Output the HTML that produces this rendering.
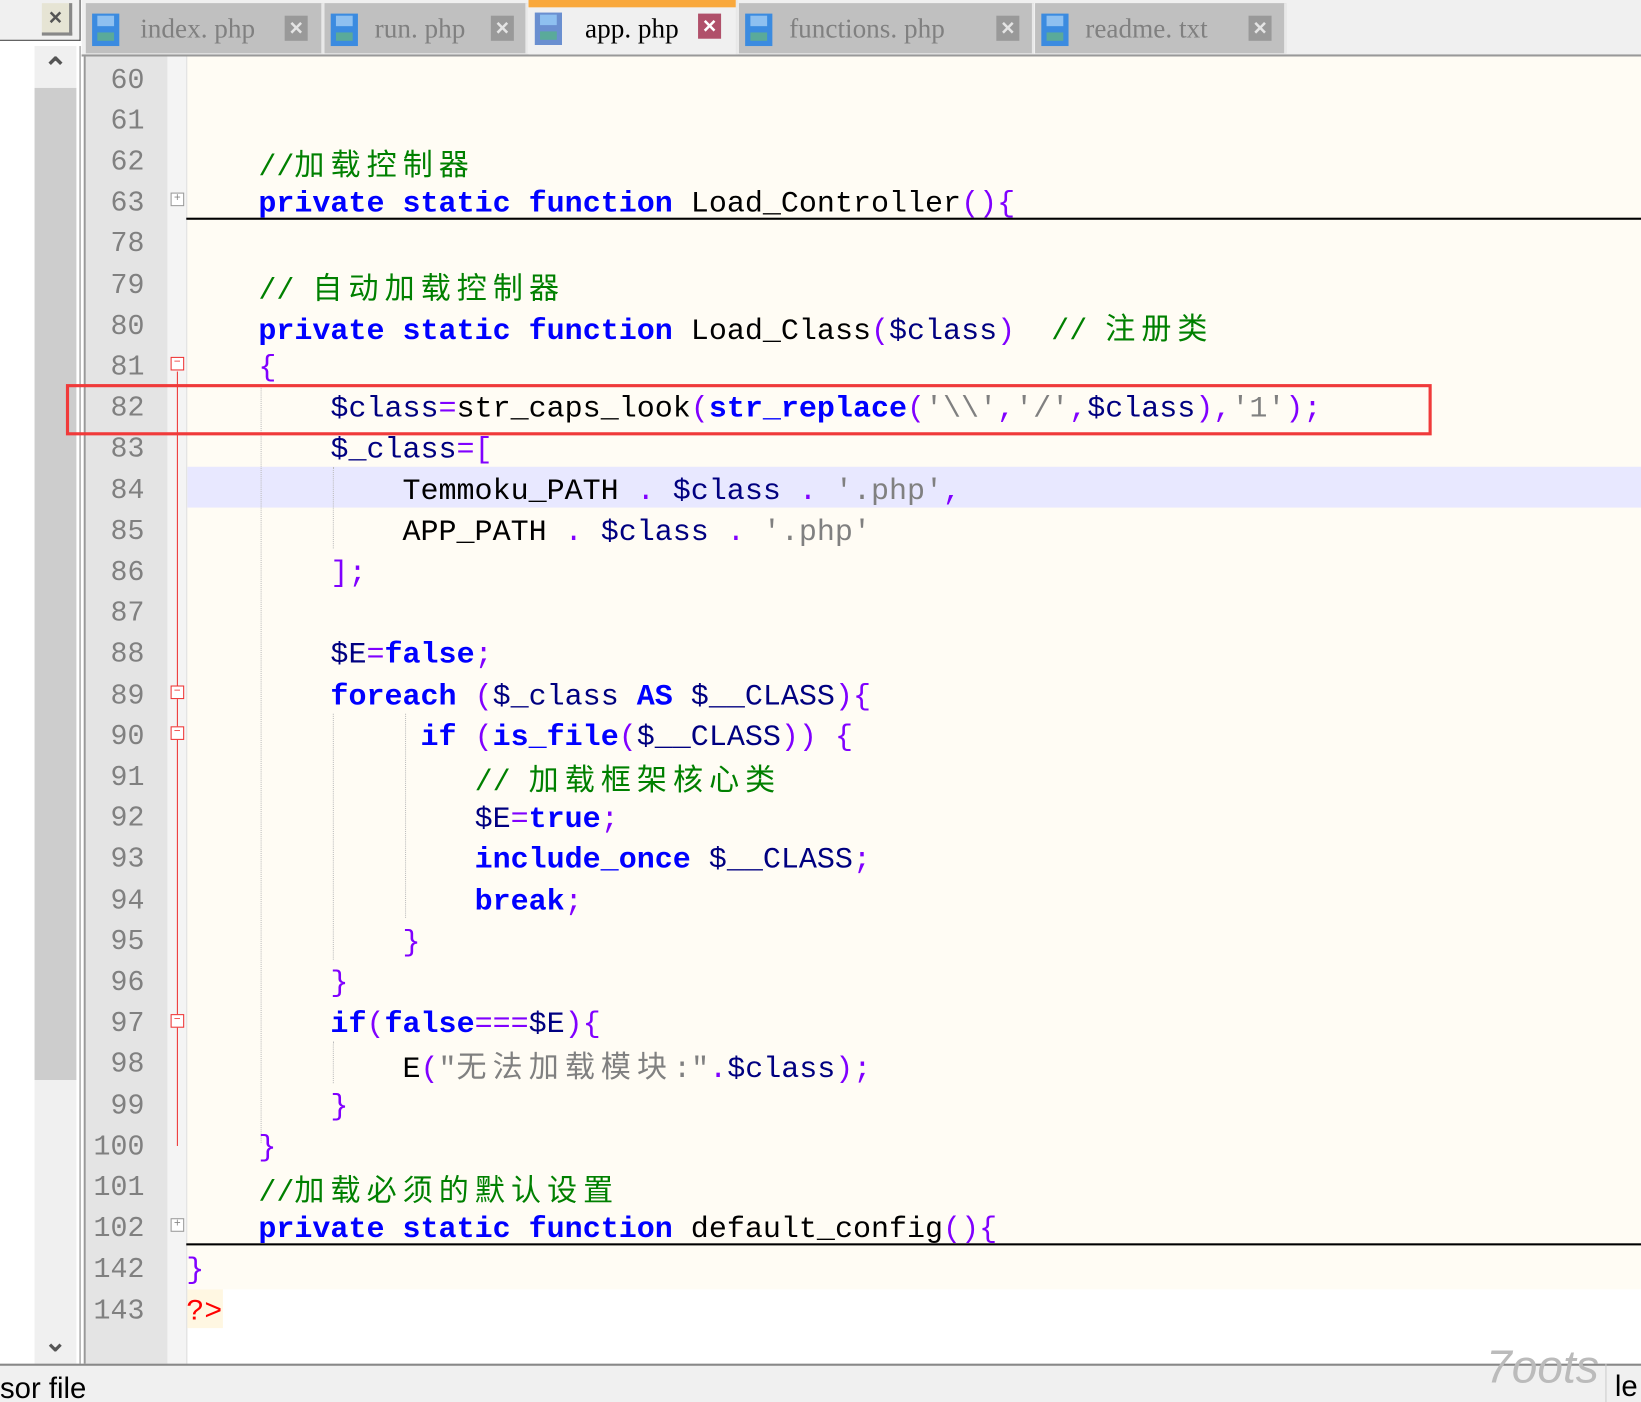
<!DOCTYPE html>
<html><head><meta charset="utf-8">
<style>
html,body{margin:0;padding:0;width:1641px;height:1402px;overflow:hidden;background:#fff;}
#s{position:absolute;left:0;top:0;width:1568px;height:1340px;transform:scale(1.04656);transform-origin:0 0;overflow:hidden;background:#fff;}
.a{position:absolute;}
.row{position:absolute;left:178px;height:39.2px;line-height:39.2px;font-family:"Liberation Mono","Noto Sans CJK SC",monospace;font-size:28.7px;white-space:pre;color:#000;margin-top:2px;}
.ln{position:absolute;left:82px;width:56px;text-align:right;height:39.2px;line-height:39.2px;font-family:"Liberation Mono",monospace;font-size:27px;color:#808080;margin-top:3px;}
.k{color:#0000ff;font-weight:bold;}
.o{color:#8000ff;}
.s{color:#808080;}
.v{color:#000080;}
.c{color:#008000;}
.z{letter-spacing:5.8px;font-family:"Noto Sans CJK SC",sans-serif;}
.tab{position:absolute;top:3px;height:48px;background:#c0c0c0;border-right:2px solid #e8e8e8;font-family:"Liberation Serif","Noto Serif CJK SC",serif;font-size:26px;color:#808080;}
.tab .t{position:absolute;top:10px;}
.fl{position:absolute;left:6px;top:10px;width:26px;height:31px;background:#3b8be0;}
.fl:before{content:"";position:absolute;left:5px;top:2px;width:16px;height:10px;background:#8ec0f0;}
.fl:after{content:"";position:absolute;left:5px;top:18px;width:16px;height:8px;background:#5aaa9a;}
.x{position:absolute;top:12px;width:22px;height:24px;background:#999;color:#e4e4e4;font:bold 22px "Liberation Sans",sans-serif;text-align:center;line-height:24px;}
.g{position:absolute;border-left:1px dotted #bbb;}
.fb{position:absolute;left:163px;width:11px;height:11px;border:1px solid #999;background:#fff;font:11px/11px "Liberation Mono",monospace;text-align:center;color:#888;}
.fr{border-color:#e33;color:#e33;}
</style></head><body><div id="s">
<div class="a" style="left:0;top:0;width:76px;height:38px;background:#f0f0f0;border-bottom:1px solid #444;border-right:1px solid #444"></div>
<div class="a" style="left:40px;top:3px;width:26px;height:28px;background:#e6e4d4;border-right:3px solid #888;border-bottom:3px solid #888;font:bold 22px/28px 'Liberation Sans',sans-serif;color:#555;text-align:center">×</div>
<div class="a" style="left:0;top:44px;width:76px;height:1260px;background:#fff;border-right:1px solid #888"></div>
<div class="a" style="left:33px;top:44px;width:40px;height:40px;background:#f0f0f0;font:bold 28px/44px 'Liberation Sans',sans-serif;color:#555;text-align:center">&#8963;</div>
<div class="a" style="left:33px;top:84px;width:40px;height:948px;background:#cdcdcd"></div>
<div class="a" style="left:33px;top:1032px;width:40px;height:272px;background:#f0f0f0"></div>
<div class="a" style="left:33px;top:1262px;width:40px;height:40px;font:bold 26px/40px 'Liberation Sans',sans-serif;color:#555;text-align:center">&#8964;</div>
<div class="a" style="left:78px;top:0;width:1490px;height:52px;background:#f0f0f0;border-bottom:2px solid #999"></div>
<div class="tab" style="left:82px;width:225px"><div class="fl"></div><span class="t" style="left:52px">index. php</span><div class="x" style="left:190px">×</div></div>
<div class="tab" style="left:310px;width:192px"><div class="fl"></div><span class="t" style="left:48px">run. php</span><div class="x" style="left:159px">×</div></div>
<div class="tab" style="left:505px;top:0;height:52px;width:198px;background:#f0f0f0;color:#000"><div class="a" style="left:0;top:0;width:198px;height:7px;background:#f9a83c"></div><div class="fl" style="top:12px;background:#6a8fd0"></div><span class="t" style="left:54px;top:13px">app. php</span><div class="x" style="left:162px;top:13px;background:#b0506a;color:#fff">×</div></div>
<div class="tab" style="left:706px;width:280px"><div class="fl"></div><span class="t" style="left:48px">functions. php</span><div class="x" style="left:246px">×</div></div>
<div class="tab" style="left:989px;width:238px"><div class="fl"></div><span class="t" style="left:48px">readme. txt</span><div class="x" style="left:204px">×</div></div>
<div class="a" style="left:80px;top:54px;width:1488px;height:1249px;background:#fff;border-left:2px solid #999"></div>
<div class="a" style="left:82px;top:54px;width:78px;height:1249px;background:#e4e4e4"></div>
<div class="a" style="left:160px;top:54px;width:18px;height:1249px;background:#f4f4f4;border-right:1px solid #ddd"></div>
<div class="a" style="left:179px;top:54px;width:1389px;height:1178px;background:#fffcf4"></div>
<div class="a" style="left:179px;top:1232px;width:34px;height:37px;background:#fff7e2"></div>
<div class="a" style="left:179px;top:446px;width:1389px;height:39px;background:#e8e8ff"></div>
<div class="a" style="left:178px;top:208px;width:1390px;height:2px;background:#000"></div>
<div class="a" style="left:178px;top:1188px;width:1390px;height:2px;background:#000"></div>
<div class="a" style="left:169px;top:355px;width:1px;height:740px;background:#e33"></div>
<div class="g" style="left:249px;top:367px;height:725px"></div>
<div class="g" style="left:318px;top:446px;height:78px"></div>
<div class="g" style="left:318px;top:682px;height:235px"></div>
<div class="g" style="left:387px;top:682px;height:195px"></div>
<div class="g" style="left:318px;top:995px;height:40px"></div>
<div class="fb" style="top:184px">+</div>
<div class="fb fr" style="top:341px">−</div>
<div class="fb fr" style="top:655px">−</div>
<div class="fb fr" style="top:694px">−</div>
<div class="fb fr" style="top:969px">−</div>
<div class="fb" style="top:1164px">+</div>

<div class="ln" style="top:55.5px">60</div>
<div class="ln" style="top:94.7px">61</div>
<div class="ln" style="top:133.9px">62</div>
<div class="ln" style="top:173.1px">63</div>
<div class="ln" style="top:212.3px">78</div>
<div class="ln" style="top:251.5px">79</div>
<div class="ln" style="top:290.7px">80</div>
<div class="ln" style="top:329.9px">81</div>
<div class="ln" style="top:369.1px">82</div>
<div class="ln" style="top:408.3px">83</div>
<div class="ln" style="top:447.5px">84</div>
<div class="ln" style="top:486.7px">85</div>
<div class="ln" style="top:525.9px">86</div>
<div class="ln" style="top:565.1px">87</div>
<div class="ln" style="top:604.3px">88</div>
<div class="ln" style="top:643.5px">89</div>
<div class="ln" style="top:682.7px">90</div>
<div class="ln" style="top:721.9px">91</div>
<div class="ln" style="top:761.1px">92</div>
<div class="ln" style="top:800.3px">93</div>
<div class="ln" style="top:839.5px">94</div>
<div class="ln" style="top:878.7px">95</div>
<div class="ln" style="top:917.9px">96</div>
<div class="ln" style="top:957.1px">97</div>
<div class="ln" style="top:996.3px">98</div>
<div class="ln" style="top:1035.5px">99</div>
<div class="ln" style="top:1074.7px">100</div>
<div class="ln" style="top:1113.9px">101</div>
<div class="ln" style="top:1153.1px">102</div>
<div class="ln" style="top:1192.3px">142</div>
<div class="ln" style="top:1231.5px">143</div>

<div class="row" style="top:133.9px">    <span class="c">//<span class="z">加载控制器</span></span></div>
<div class="row" style="top:173.1px">    <span class="k">private</span> <span class="k">static</span> <span class="k">function</span> Load_Controller<span class="o">(){</span></div>
<div class="row" style="top:251.5px">    <span class="c">// <span class="z">自动加载控制器</span></span></div>
<div class="row" style="top:290.7px">    <span class="k">private</span> <span class="k">static</span> <span class="k">function</span> Load_Class<span class="o">(</span><span class="v">$class</span><span class="o">)</span>  <span class="c">// <span class="z">注册类</span></span></div>
<div class="row" style="top:329.9px">    <span class="o">{</span></div>
<div class="row" style="top:369.1px">        <span class="v">$class</span><span class="o">=</span>str_caps_look<span class="o">(</span><span class="k">str_replace</span><span class="o">(</span><span class="s">'\\'</span><span class="o">,</span><span class="s">'/'</span><span class="o">,</span><span class="v">$class</span><span class="o">),</span><span class="s">'1'</span><span class="o">);</span></div>
<div class="row" style="top:408.3px">        <span class="v">$_class</span><span class="o">=[</span></div>
<div class="row" style="top:447.5px">            Temmoku_PATH <span class="o">.</span> <span class="v">$class</span> <span class="o">.</span> <span class="s">'.php'</span><span class="o">,</span></div>
<div class="row" style="top:486.7px">            APP_PATH <span class="o">.</span> <span class="v">$class</span> <span class="o">.</span> <span class="s">'.php'</span></div>
<div class="row" style="top:525.9px">        <span class="o">];</span></div>
<div class="row" style="top:604.3px">        <span class="v">$E</span><span class="o">=</span><span class="k">false</span><span class="o">;</span></div>
<div class="row" style="top:643.5px">        <span class="k">foreach</span> <span class="o">(</span><span class="v">$_class</span> <span class="k">AS</span> <span class="v">$__CLASS</span><span class="o">){</span></div>
<div class="row" style="top:682.7px">             <span class="k">if</span> <span class="o">(</span><span class="k">is_file</span><span class="o">(</span><span class="v">$__CLASS</span><span class="o">))</span> <span class="o">{</span></div>
<div class="row" style="top:721.9px">                <span class="c">// <span class="z">加载框架核心类</span></span></div>
<div class="row" style="top:761.1px">                <span class="v">$E</span><span class="o">=</span><span class="k">true</span><span class="o">;</span></div>
<div class="row" style="top:800.3px">                <span class="k">include_once</span> <span class="v">$__CLASS</span><span class="o">;</span></div>
<div class="row" style="top:839.5px">                <span class="k">break</span><span class="o">;</span></div>
<div class="row" style="top:878.7px">            <span class="o">}</span></div>
<div class="row" style="top:917.9px">        <span class="o">}</span></div>
<div class="row" style="top:957.1px">        <span class="k">if</span><span class="o">(</span><span class="k">false</span><span class="o">===</span><span class="v">$E</span><span class="o">){</span></div>
<div class="row" style="top:996.3px">            E<span class="o">(</span><span class="s">"<span class="z">无法加载模块</span>:"</span><span class="o">.</span><span class="v">$class</span><span class="o">);</span></div>
<div class="row" style="top:1035.5px">        <span class="o">}</span></div>
<div class="row" style="top:1074.7px">    <span class="o">}</span></div>
<div class="row" style="top:1113.9px">    <span class="c">//<span class="z">加载必须的默认设置</span></span></div>
<div class="row" style="top:1153.1px">    <span class="k">private</span> <span class="k">static</span> <span class="k">function</span> default_config<span class="o">(){</span></div>
<div class="row" style="top:1192.3px"><span class="o">}</span></div>
<div class="row" style="top:1231.5px"><span style="color:#ff0000">?&gt;</span></div>

<div class="a" style="left:63px;top:367px;width:1299px;height:43px;border:3px solid #f03a3a"></div>
<div class="a" style="left:0;top:1303px;width:1568px;height:37px;background:#f0f0f0;border-top:2px solid #888"></div>
<div class="a" style="left:0;top:1310px;font:28px/34px 'Liberation Sans',sans-serif;color:#000">sor file</div>
<div class="a" style="left:1534px;top:1303px;width:34px;height:37px;border-left:1px solid #ccc;font:28px/44px 'Liberation Sans',sans-serif;color:#000;padding-left:8px">le</div>
<div class="a" style="left:1420px;top:1282px;font:italic 44px/50px 'Liberation Sans',sans-serif;color:#bbb">7oots</div>
</div></body></html>
